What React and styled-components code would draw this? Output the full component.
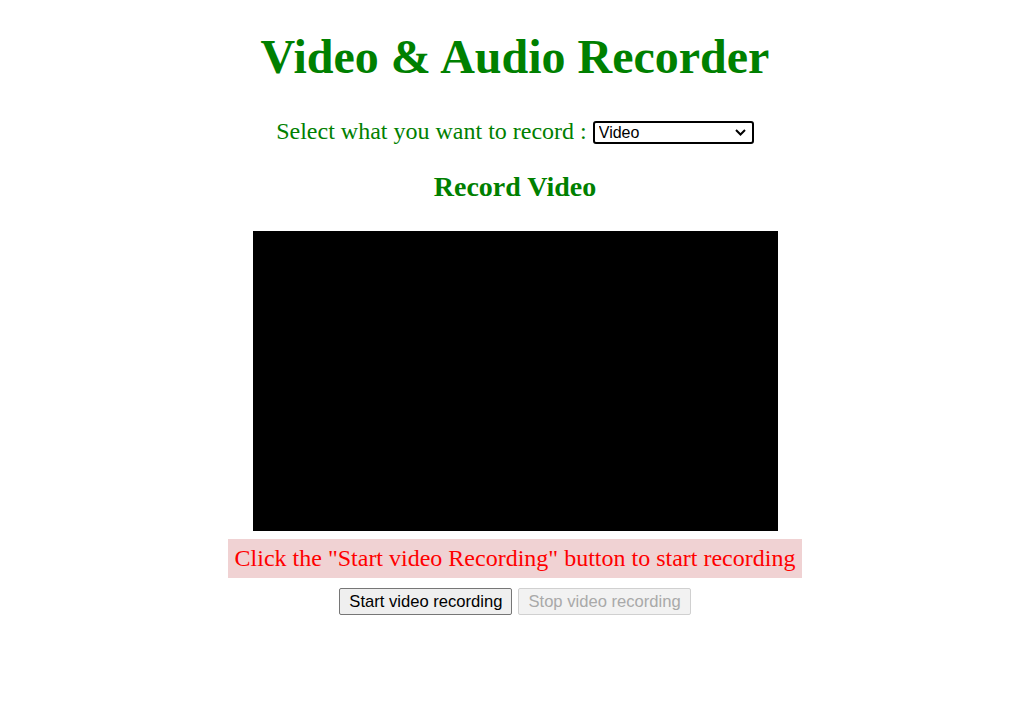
import React from "react";
import styled, { createGlobalStyle } from "styled-components";

const Global = createGlobalStyle`
  body {
    margin: 8px;
    font-family: "Liberation Serif", "Times New Roman", serif;
    background: #fff;
  }
`;

const Page = styled.div`
  display: flex;
  flex-direction: column;
  align-items: center;
  text-align: center;
  padding-left: 12px;
`;

const Title = styled.h1`
  color: green;
  font-size: 48px;
  font-weight: bold;
  margin: 21px 0 34px;
  line-height: 1.15;
`;

const Row = styled.div`
  color: green;
  font-size: 24px;
  display: flex;
  align-items: center;
  gap: 6px;
`;

const SelectWrap = styled.span`
  position: relative;
  display: inline-flex;
  margin-top: 2px;
`;

const Select = styled.select`
  appearance: none;
  -webkit-appearance: none;
  width: 161px;
  height: 23px;
  font-family: "Liberation Sans", Arial, sans-serif;
  font-size: 16px;
  line-height: 19px;
  border: 2px solid #000;
  border-radius: 3px;
  padding: 0 24px 0 4px;
  background: #fff;
  color: #000;
  outline: none;
`;

const Chevron = styled.svg`
  position: absolute;
  right: 8px;
  top: 8px;
  width: 11px;
  height: 7px;
  pointer-events: none;
`;

const SubTitle = styled.h2`
  color: green;
  font-size: 28px;
  font-weight: bold;
  margin: 26px 0 28px;
  line-height: 1.15;
`;

const Video = styled.div`
  width: 525px;
  height: 300px;
  background: #000;
`;

const Message = styled.div`
  margin-top: 8px;
  padding: 4px 7px;
  background: #f0d2d3;
  color: red;
  font-size: 24px;
  line-height: 31px;
`;

const Buttons = styled.div`
  display: flex;
  gap: 6px;
  margin-top: 10px;
`;

const Button = styled.button`
  font-family: "Liberation Sans", Arial, sans-serif;
  font-size: 16.6px;
  height: 27px;
  padding: 0 9px;
  border-radius: 2px;
  border: 1px solid ${(p) => (p.disabled ? "#d0d0d0" : "#767676")};
  background: ${(p) => (p.disabled ? "#f2f2f2" : "#efefef")};
  color: ${(p) => (p.disabled ? "#a9a9a9" : "#000")};
`;

export default function App() {
  return (
    <Page>
      <Global />
      <Title>Video &amp; Audio Recorder</Title>
      <Row>
        <span>Select what you want to record :</span>
        <SelectWrap>
          <Select defaultValue="video">
            <option value="video">Video</option>
            <option value="audio">Audio</option>
          </Select>
          <Chevron viewBox="0 0 11 7">
            <path d="M1 1 L5.5 5.5 L10 1" fill="none" stroke="#000" strokeWidth="2" />
          </Chevron>
        </SelectWrap>
      </Row>
      <SubTitle>Record Video</SubTitle>
      <Video />
      <Message>Click the "Start video Recording" button to start recording</Message>
      <Buttons>
        <Button>Start video recording</Button>
        <Button disabled>Stop video recording</Button>
      </Buttons>
    </Page>
  );
}
